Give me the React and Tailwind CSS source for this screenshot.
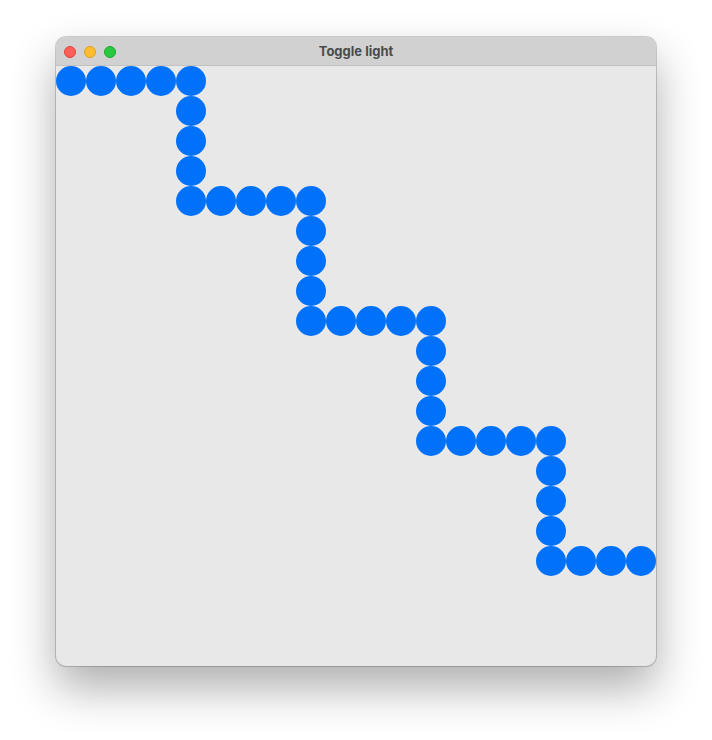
import React from 'react'

// path cells as [row, col] on a 20x20 grid of 30px cells
const buildPath = () => {
  const cells = []
  for (let step = 0; step < 4; step++) {
    const r = step * 4
    const c = step * 4
    for (let i = 0; i < 4; i++) cells.push([r, c + i])
    for (let i = 0; i < 4; i++) cells.push([r + i, c + 4])
  }
  for (let i = 0; i < 4; i++) cells.push([16, 16 + i])
  return new Set(cells.map(([r, c]) => `${r}-${c}`))
}

const path = buildPath()

const App = () => {
  const cells = []
  for (let r = 0; r < 20; r++) {
    for (let c = 0; c < 20; c++) {
      cells.push(
        <div key={`${r}-${c}`} className="h-[30px] w-[30px]">
          {path.has(`${r}-${c}`) && <div className="h-full w-full rounded-full bg-[#0071fa]" />}
        </div>
      )
    }
  }

  return (
    <main className="min-h-screen bg-white pl-[56px] pt-[37px] font-['Inter','Liberation_Sans',sans-serif]">
      <div className="w-[600px] overflow-hidden rounded-[10px] bg-[#e8e8e8] shadow-[0_0_0_1px_rgba(0,0,0,0.18),0_22px_45px_rgba(0,0,0,0.32)]">
        <div className="relative flex h-[29px] items-center border-b border-[#c2c2c2] bg-[#d1d1d1] px-[8px] pt-[2px]">
          <div className="flex gap-[8px]">
            <span className="h-[12px] w-[12px] rounded-full border border-[#e0443e] bg-[#fe5f57]" />
            <span className="h-[12px] w-[12px] rounded-full border border-[#dea123] bg-[#febc2e]" />
            <span className="h-[12px] w-[12px] rounded-full border border-[#1aab29] bg-[#28c840]" />
          </div>
          <div className="absolute inset-0 flex items-center justify-center pt-[2px] text-[13px] font-bold text-[#4b4b4b]">
            Toggle light
          </div>
        </div>
        <div className="grid grid-cols-[repeat(20,30px)]">{cells}</div>
      </div>
    </main>
  )
}

export default App
